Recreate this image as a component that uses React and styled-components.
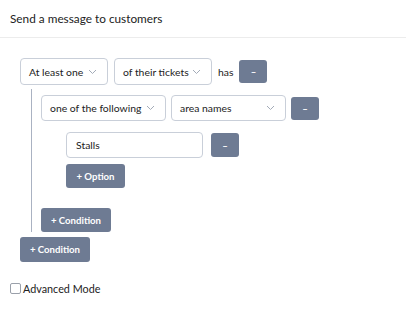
import React from 'react';
import styled, { createGlobalStyle } from 'styled-components';

const GlobalStyle = createGlobalStyle`
  html, body {
    margin: 0;
    padding: 0;
    background: #ffffff;
    font-family: Lato, "Noto Sans", sans-serif;
    color: #222;
  }
`;

const Header = styled.div`
  height: 38px;
  box-sizing: border-box;
  padding: 0 10px;
  display: flex;
  align-items: center;
  border-bottom: 1px solid #ececec;
  font-size: 11.8px;
  color: #222;
`;

const Body = styled.div`
  padding: 20px 20px 0 20px;
`;

const Row = styled.div`
  display: flex;
  align-items: center;
  gap: ${(p) => p.gap || 6}px;
`;

const SelectBox = styled.div`
  box-sizing: border-box;
  width: ${(p) => p.w}px;
  height: ${(p) => p.h || 27}px;
  border: 1px solid #c9cfd9;
  border-radius: 4px;
  display: flex;
  align-items: center;
  justify-content: space-between;
  padding: 0 10px 0 8px;
  font-size: 10.4px;
  white-space: nowrap;
  color: #222;
  background: #fff;
  svg {
    flex-shrink: 0;
  }
`;

const Chevron = () => (
  <svg width="9" height="6" viewBox="0 0 9 6" fill="none">
    <path d="M1 1l3.5 3.5L8 1" stroke="#a3abb8" strokeWidth="1" />
  </svg>
);

const Select = ({ w, h, children }) => (
  <SelectBox w={w} h={h}>
    <span>{children}</span>
    <Chevron />
  </SelectBox>
);

const Label = styled.span`
  font-size: 10.4px;
  color: #222;
`;

const Button = styled.button`
  box-sizing: border-box;
  height: ${(p) => p.h || 24}px;
  width: ${(p) => p.w}px;
  padding: 0;
  border: none;
  border-radius: 3px;
  background: #6e7b93;
  color: #fff;
  font-family: Lato, "Noto Sans", sans-serif;
  font-size: 9.6px;
  font-weight: 700;
  white-space: nowrap;
  display: flex;
  align-items: center;
  justify-content: center;
  margin-top: ${(p) => p.mt || 0}px;
`;

const Nested = styled.div`
  margin: 4px 0 0 11px;
  padding: 6px 0 0 9px;
  border-left: 1px solid #aab2c2;
  display: flex;
  flex-direction: column;
  align-items: flex-start;
`;

const Options = styled.div`
  margin: 11px 0 0 25px;
  display: flex;
  flex-direction: column;
  align-items: flex-start;
`;

const Input = styled.div`
  box-sizing: border-box;
  width: 137px;
  height: 26px;
  border: 1px solid #c9cfd9;
  border-radius: 4px;
  display: flex;
  align-items: center;
  padding: 0 9px;
  font-size: 10.4px;
  color: #222;
`;

const Footer = styled.label`
  display: flex;
  align-items: center;
  gap: 2px;
  padding: 0 10px;
  margin-top: 20px;
  font-size: 10.8px;
  color: #222;
`;

const Check = styled.span`
  box-sizing: border-box;
  width: 11px;
  height: 11px;
  border: 1px solid #9aa0aa;
  border-radius: 2px;
  background: #fff;
`;

export default function App() {
  return (
    <>
      <GlobalStyle />
      <Header>Send a message to customers</Header>
      <Body>
        <Row>
          <Select w={88}>At least one</Select>
          <Select w={98}>of their tickets</Select>
          <Label>has</Label>
          <Button w={28} h={23}>–</Button>
        </Row>
        <Nested>
          <Row gap={5}>
            <Select w={125} h={26}>one of the following</Select>
            <Select w={115} h={26}>area names</Select>
            <Button w={28} h={23}>–</Button>
          </Row>
          <Options>
            <Row gap={8}>
              <Input>Stalls</Input>
              <Button w={28} h={24}>–</Button>
            </Row>
            <Button mt={6} w={59}>+ Option</Button>
          </Options>
          <Button mt={20} w={70}>+ Condition</Button>
        </Nested>
        <Button mt={5} w={70} h={25}>+ Condition</Button>
      </Body>
      <Footer>
        <Check />
        Advanced Mode
      </Footer>
    </>
  );
}
